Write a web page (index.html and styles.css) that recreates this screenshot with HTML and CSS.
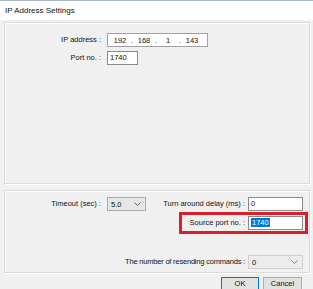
FILE: index.html
```html
<!DOCTYPE html>
<html>
<head>
<meta charset="utf-8">
<link rel="stylesheet" href="styles.css">
</head>
<body>
<div class="titlebar">IP Address Settings</div>
<div class="group group-top">
  <div class="row">
    <span class="label lbl-left">IP address :</span>
    <div class="ipbox">
      <span class="seg">192</span><span class="dot">.</span>
      <span class="seg">168</span><span class="dot">.</span>
      <span class="seg">1</span><span class="dot">.</span>
      <span class="seg">143</span>
    </div>
  </div>
  <div class="row row-gap">
    <span class="label lbl-left">Port no. :</span>
    <div class="textbox port">1740</div>
  </div>
</div>
<div class="group group-bottom">
  <div class="row row-right">
    <span class="label lbl-left">Timeout (sec) :</span>
    <div class="combo combo-timeout"><span>5.0</span><svg class="chev" viewBox="0 0 7 4" width="7" height="4"><path d="M0.5 0.5 L3.5 3.5 L6.5 0.5" fill="none" stroke="#606060" stroke-width="1"/></svg></div>
    <span class="label lbl-fill">Turn around delay (ms) :</span>
    <div class="textbox wide">0</div>
  </div>
  <div class="row row-mark">
    <div class="mark">
      <span class="label">Source port no. :</span>
      <div class="textbox wide"><span class="sel">1740</span></div>
    </div>
  </div>
  <div class="row row-right row-last">
    <span class="label lbl-fill narrow">The number of resending commands :</span>
    <div class="combo combo-wide"><span>0</span><svg class="chev" viewBox="0 0 7 4" width="7" height="4"><path d="M0.5 0.5 L3.5 3.5 L6.5 0.5" fill="none" stroke="#808080" stroke-width="1"/></svg></div>
  </div>
</div>
<div class="buttons">
  <div class="btn btn-default">OK</div>
  <div class="btn">Cancel</div>
</div>
</body>
</html>
```
FILE: styles.css
```css
html, body {
  margin: 0;
  padding: 0;
}
body {
  width: 313px;
  height: 289px;
  overflow: hidden;
  background: #f0f0f0;
  font-family: "Liberation Sans", Arial, sans-serif;
  font-size: 7.5px;
  color: #111;
}
.titlebar {
  height: 20px;
  background: #fff;
  border-top: 1px solid #a7b9ca;
  box-sizing: border-box;
  display: flex;
  align-items: center;
  padding-left: 5px;
  font-size: 8px;
}
.group {
  margin: 2px 3px 0 4px;
  border: 1px solid #dadada;
  box-shadow: inset 1px 1px 0 #fff, 1px 1px 0 #fff;
  box-sizing: border-box;
}
.group-top {
  height: 162px;
  padding-top: 10px;
}
.group-bottom {
  margin-top: 6px;
  height: 83px;
  padding-top: 6px;
  padding-right: 6px;
}
.row {
  display: flex;
  align-items: center;
  height: 14px;
}
.row-gap {
  margin-top: 4px;
}
.label {
  white-space: nowrap;
  line-height: 14px;
}
.lbl-left {
  width: 96px;
  text-align: right;
  margin-right: 6px;
}
.lbl-fill {
  flex: 1;
  text-align: right;
  margin-right: 3px;
}
.narrow {
  letter-spacing: -0.2px;
}
.ipbox {
  width: 101px;
  height: 14px;
  box-sizing: border-box;
  border: 1px solid #a0a0a0;
  background: #fff;
  display: flex;
  align-items: center;
  padding-left: 2px;
}
.seg {
  width: 20px;
  text-align: center;
}
.dot {
  width: 4px;
  text-align: center;
}
.textbox {
  height: 14px;
  box-sizing: border-box;
  border: 1px solid #8a8a8a;
  background: #fff;
  padding-left: 2px;
  line-height: 12px;
}
.port {
  width: 31px;
}
.wide {
  width: 55px;
}
.combo {
  height: 14px;
  box-sizing: border-box;
  border: 1px solid #b4b4b4;
  background: #e6e6e6;
  display: flex;
  align-items: center;
  justify-content: space-between;
  padding: 0 4px 0 3px;
}
.combo-timeout {
  width: 39px;
  border-color: #acacac;
}
.combo-wide {
  width: 55px;
  background: #ececec;
  border-color: #cfcfcf;
}
.row-mark {
  justify-content: flex-end;
  height: auto;
  margin-top: 1px;
  margin-right: -5px;
}
.mark {
  display: flex;
  align-items: center;
  border: 3px solid #d9202a;
  padding: 1px 2px 1px 0;
  width: 129px;
  box-sizing: border-box;
  justify-content: flex-end;
}
.mark .label {
  margin-right: 3px;
}
.sel {
  background: #0078d7;
  color: #fff;
  padding: 0 1px;
}
.row-last {
  margin-top: 21px;
}
.buttons {
  display: flex;
  justify-content: flex-end;
  gap: 4px;
  padding-right: 11px;
  margin-top: 4px;
}
.btn {
  width: 39px;
  height: 15px;
  box-sizing: border-box;
  border: 1px solid #adadad;
  background: #e1e1e1;
  text-align: center;
  line-height: 12px;
}
.btn-default {
  width: 38px;
  border-color: #0078d7;
}
```
